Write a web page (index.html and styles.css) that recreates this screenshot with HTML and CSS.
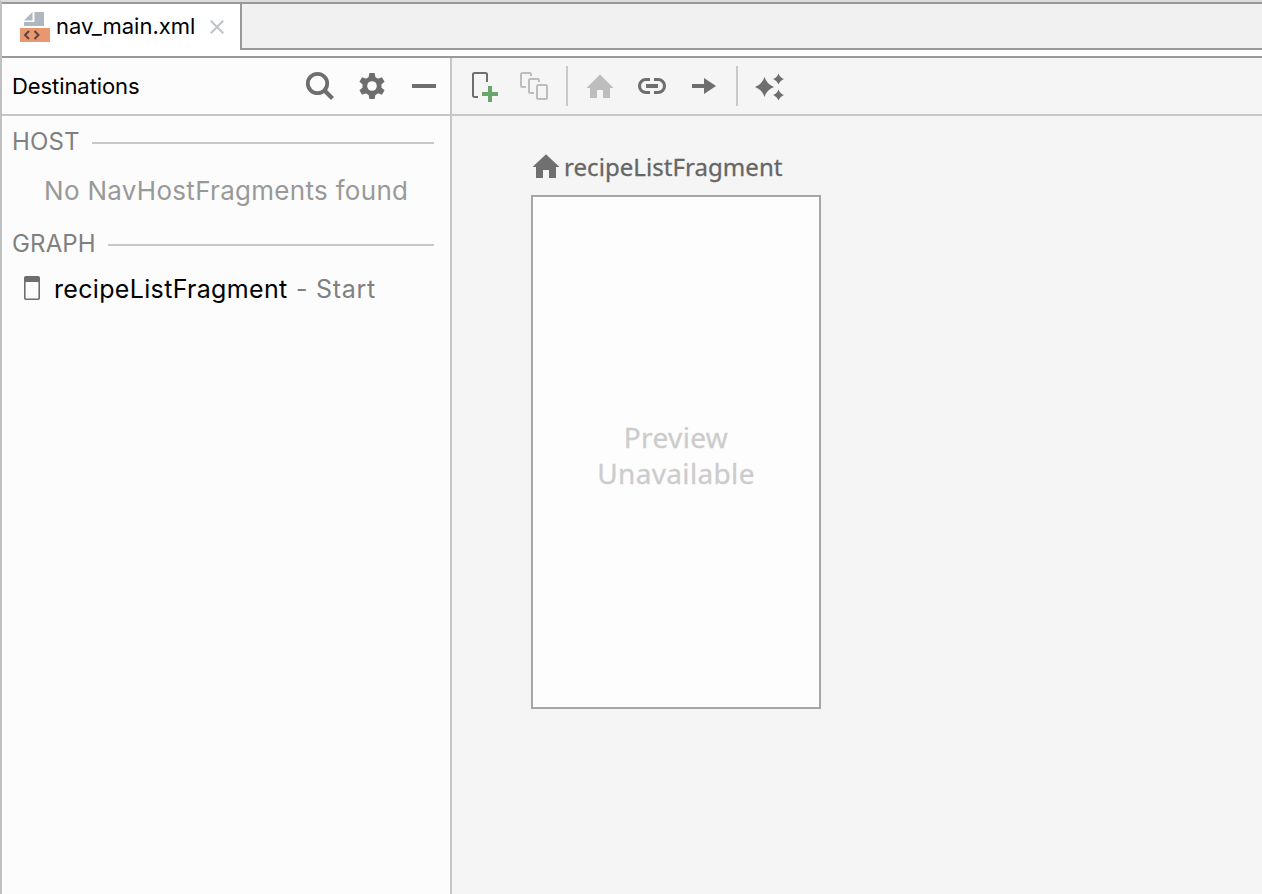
FILE: index.html
```html
<!DOCTYPE html>
<html lang="en">
<head>
<meta charset="utf-8">
<title>nav_main.xml</title>
<link rel="stylesheet" href="styles.css">
</head>
<body>
<div class="editor">
  <header class="tabs">
    <div class="tab">
      <svg class="file-icon" width="30" height="30" viewBox="0 0 30 30"><path fill="#afb7bf" d="M4 8.500 12.500 0v8.500zM14.500 0H24v14H4v-4h10.500z"/><path fill="#e89770" d="M0 16h30v14H0z"/><path d="m9 19-4 4 4 4M14.500 19l4 4-4 4" fill="none" stroke="#5c453b" stroke-width="2"/></svg>
      <span class="tab-name">nav_main.xml</span>
      <svg class="close" width="14" height="14" viewBox="0 0 14 14"><path d="m.8.8 12.400 12.400M13.200.8.8 13.200" stroke="#bfc3c6" stroke-width="2"/></svg>
    </div>
    <div class="tab-space"></div>
  </header>
  <main class="workspace">
    <aside class="sidebar">
      <div class="side-head">
        <span class="side-title">Destinations</span>
        <svg class="search" width="28" height="28" viewBox="0 0 28 28" fill="none" stroke="#6e6e6e"><circle cx="11.500" cy="11.500" r="9.700" stroke-width="3.800"/><path d="m18.500 18.500 8 8" stroke-width="4.200"/></svg>
        <svg class="gear" width="26" height="26" viewBox="-13 -13 26 26"><g fill="#6e6e6e"><circle r="9.600"/><path id="tooth" d="M-2.600-13h5.200L3.600-8h-7.200z"/><use href="#tooth" transform="rotate(60)"/><use href="#tooth" transform="rotate(120)"/><use href="#tooth" transform="rotate(180)"/><use href="#tooth" transform="rotate(240)"/><use href="#tooth" transform="rotate(300)"/></g><circle r="4.800" fill="#fcfcfc"/></svg>
        <svg width="24" height="4" viewBox="0 0 24 4"><path fill="#6e6e6e" d="M0 0h24v4H0z"/></svg>
      </div>
      <div class="group"><span class="group-name">HOST</span><i class="rule"></i></div>
      <div class="empty"><span class="empty-text">No NavHostFragments found</span></div>
      <div class="group"><span class="group-name graph-name">GRAPH</span><i class="rule"></i></div>
      <div class="dest">
        <svg width="16" height="24" viewBox="0 0 16 24"><rect x=".8" y=".8" width="14.400" height="22.400" rx="1" fill="none" stroke="#6e6e6e" stroke-width="1.600"/><path d="M1 1h14v5H1z" fill="#6e6e6e"/></svg>
        <span class="dest-name">recipeListFragment</span><span class="dest-start">- Start</span>
      </div>
    </aside>
    <section class="design">
      <div class="toolbar">
        <svg class="add" width="28" height="30" viewBox="0 0 28 30"><path d="M6 25H2.500A1.500 1.500 0 0 1 1 23.500v-21A1.500 1.500 0 0 1 2.500 1h11A1.500 1.500 0 0 1 15 2.500V10" fill="none" stroke="#6e6e6e" stroke-width="2"/><path fill="#6aa56c" d="M16 14h4v6h6v4h-6v6h-4v-6h-6v-4h6z"/></svg>
        <svg class="copies" width="28" height="28" viewBox="0 0 28 28" fill="none" stroke="#bdbdbd" stroke-width="2"><path d="M6 15H2.500A1.500 1.500 0 0 1 1 13.500v-11A1.500 1.500 0 0 1 2.500 1h7A1.500 1.500 0 0 1 11 2.500V4M14 21h-3.500A1.500 1.500 0 0 1 9 19.500v-11A1.500 1.500 0 0 1 10.500 7h7A1.500 1.500 0 0 1 19 8.500V10"/><rect x="17" y="13" width="10" height="14" rx="1.500"/></svg>
        <i class="sep first"></i>
        <svg class="home" width="28" height="25" viewBox="0 0 28 25"><path fill="#bdbdbd" d="M14 .5 27.500 14H24v10h-7v-8h-6v8H4V14H.5z"/></svg>
        <svg class="link" width="28" height="16" viewBox="0 0 28 16"><path d="M12 1.500H8a6.500 6.500 0 0 0 0 13h4M16 1.500h4a6.500 6.500 0 0 1 0 13h-4" fill="none" stroke="#6e6e6e" stroke-width="3"/><path d="M8 6h12v4H8z" fill="#6e6e6e"/></svg>
        <svg class="arrow" width="24" height="16" viewBox="0 0 24 16"><path d="M0 6h12V0l12 8-12 8v-6H0z" fill="#6e6e6e"/></svg>
        <i class="sep second"></i>
        <svg class="stars" width="30" height="28" viewBox="0 0 30 28"><path fill="#6e6e6e" d="M9.500 5q2.500 7.500 9.500 10-7 2.500-9.500 10-2.500-7.500-9.500-10 7-2.500 9.500-10zM23.500 1.500q1.500 4.200 5.500 5.500-4 1.500-5.500 5.500-1.500-4-5.500-5.500 4-1.300 5.500-5.500zM23.500 17.500q1.500 4.200 5.500 5.500-4 1.500-5.500 5.500-1.500-4-5.500-5.500 4-1.300 5.500-5.500z"/></svg>
      </div>
      <div class="canvas">
        <div class="label">
          <svg width="28" height="25" viewBox="0 0 28 25"><path fill="#707070" d="M14 .3 27.500 13H24v11h-7v-8h-6v8H4V13H.5z"/></svg>
          <span class="label-name">recipeListFragment</span>
        </div>
        <div class="preview"><span class="preview-word">Preview</span><span class="unavailable-word">Unavailable</span></div>
      </div>
    </section>
  </main>
</div>
</body>
</html>
```
FILE: styles.css
```css
* { box-sizing: border-box; }
body { margin: 0; overflow: hidden; font-family: Inter, sans-serif; color: #000; }
svg { display: block; flex: none; overflow: visible; }
span { white-space: nowrap; }
.editor { width: 1262px; height: 894px; display: flex; flex-direction: column; border-top: 2px solid #dcdcdc; border-left: 2px solid #c0c0c0; background: #fff; }
.tabs { display: flex; height: 56px; flex: none; border-top: 2px solid #999; border-bottom: 2px solid #999; }
.tab { width: 238px; display: flex; align-items: flex-start; padding: 8px 0 0 18px; }
.tab-name { font-size: 22px; line-height: 28px; margin-left: 6px; width: 138px; }
.close { margin: 8px 0 0 16px; }
.tab-space { flex: 1; height: 46px; background: #f1f1f1; border-left: 2px solid #999; border-bottom: 2px solid #999; }
.workspace { flex: 1; display: flex; min-height: 0; }
.sidebar { width: 450px; flex: none; background: #fcfcfc; border-right: 2px solid #c6c6c6; }
.side-head { height: 58px; border-bottom: 2px solid #c6c6c6; display: flex; align-items: center; padding-left: 10px; }
.side-title { font-size: 22px; letter-spacing: -.08px; width: 294px; }
.gear { margin: 0 27px 0 25px; }
.group { display: flex; align-items: center; height: 54px; padding: 0 16px 0 10px; color: #808080; font-size: 24px; }
.group-name { width: 66px; margin-right: 14px; padding-bottom: 3px; letter-spacing: .1px; }
.graph-name { width: 83px; margin-right: 13px; letter-spacing: .15px; }
.rule { flex: 1; height: 2px; background: #c9c9c9; }
.empty { height: 48px; display: flex; align-items: center; padding: 0 0 7px 42px; font-size: 26px; letter-spacing: .3px; color: #999; }
.dest { height: 32px; display: flex; align-items: center; padding-left: 22px; font-size: 25px; }
.dest-name { margin-left: 14px; width: 233px; padding-top: 2px; letter-spacing: .33px; }
.dest-start { margin-left: 9px; padding-top: 2px; letter-spacing: .7px; color: #808080; }
.design { flex: 1; display: flex; flex-direction: column; background: #f5f5f5; }
.toolbar { height: 58px; border-bottom: 2px solid #c6c6c6; display: flex; align-items: center; padding-left: 20px; }
.add { margin-top: 2px; }
.copies { margin-left: 20px; }
.sep { width: 2px; height: 40px; background: #c9c9c9; }
.first { margin: 0 18px; }
.link { margin-left: 24px; }
.arrow { margin-left: 26px; }
.second { margin: 0 17px 0 20px; }
.canvas { padding: 38px 0 0 79px; }
.label { height: 41px; display: flex; padding-left: 1px; color: #666; font-family: "Noto Sans", sans-serif; font-size: 24px; }
.label-name { margin-left: 4px; line-height: 25px; letter-spacing: .06px; -webkit-text-stroke: .3px #666; }
.preview { width: 290px; height: 514px; background: #fdfdfd; border: 2px solid #a6a6a6; display: flex; flex-direction: column; align-items: center; justify-content: center; padding-top: 6px; color: #ccc; font-family: "Noto Sans", sans-serif; font-size: 28px; line-height: 36px; letter-spacing: .35px; -webkit-text-stroke: .3px #ccc; }
```
